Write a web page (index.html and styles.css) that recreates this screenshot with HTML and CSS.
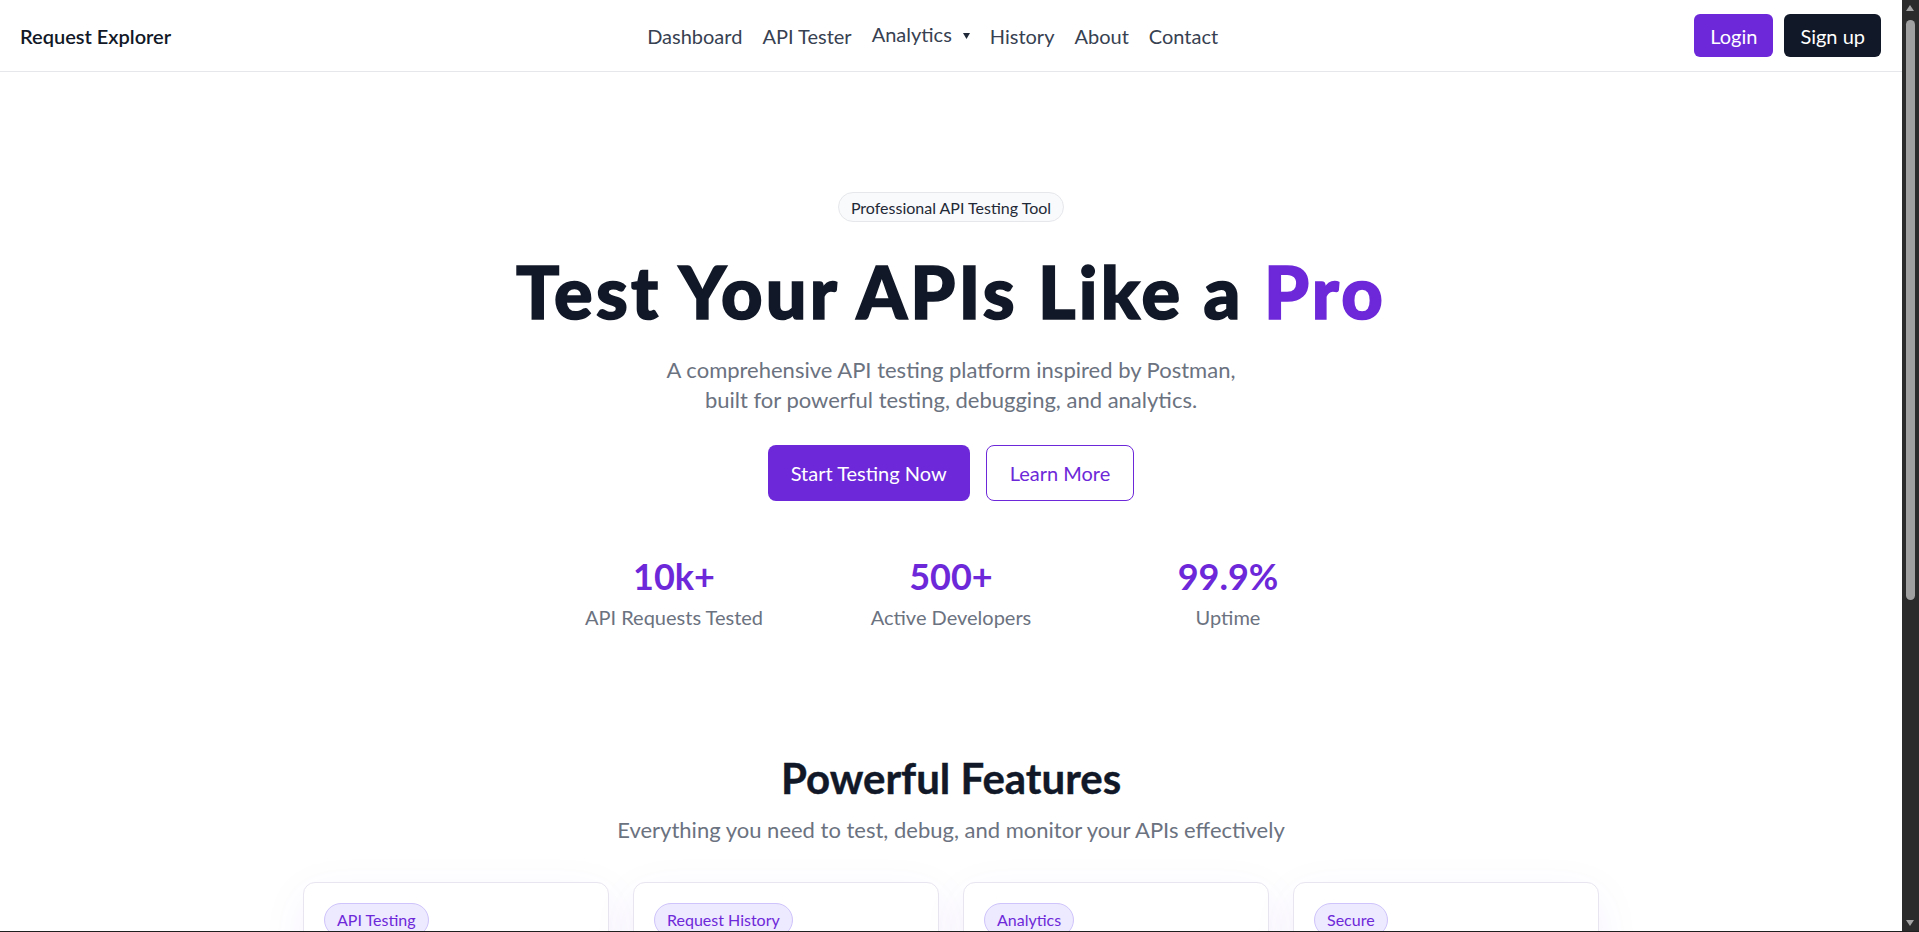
FILE: index.html
```html
<!DOCTYPE html>
<html lang="en">
<head>
<meta charset="utf-8">
<title>Request Explorer</title>
<link rel="stylesheet" href="styles.css">
</head>
<body>
<header class="nav">
  <a class="brand" href="#">Request Explorer</a>
  <nav class="nav-links">
    <a href="#">Dashboard</a>
    <a href="#">API Tester</a>
    <button class="nav-dropdown" type="button">Analytics
      <svg class="caret" width="7" height="6" viewBox="0 0 7 6"><path d="M0 0h7L3.5 6z" fill="#1f2937"/></svg>
    </button>
    <a href="#">History</a>
    <a href="#">About</a>
    <a href="#">Contact</a>
  </nav>
  <div class="nav-actions">
    <button class="btn-login" type="button">Login</button>
    <button class="btn-signup" type="button">Sign up</button>
  </div>
</header>

<main>
  <section class="hero">
    <span class="badge">Professional API Testing Tool</span>
    <h1 class="hero-title">Test Your APIs Like a <span class="accent">Pro</span></h1>
    <p class="hero-sub">A comprehensive API testing platform inspired by Postman,<br>built for powerful testing, debugging, and analytics.</p>
    <div class="hero-actions">
      <a class="btn btn-primary" href="#">Start Testing Now</a>
      <a class="btn btn-outline" href="#">Learn More</a>
    </div>
    <div class="stats">
      <div class="stat"><div class="stat-value">10k+</div><div class="stat-label">API Requests Tested</div></div>
      <div class="stat"><div class="stat-value">500+</div><div class="stat-label">Active Developers</div></div>
      <div class="stat"><div class="stat-value">99.9%</div><div class="stat-label">Uptime</div></div>
    </div>
  </section>

  <section class="features">
    <h2 class="section-title">Powerful Features</h2>
    <p class="section-sub">Everything you need to test, debug, and monitor your APIs effectively</p>
    <div class="feature-grid">
      <article class="card">
        <span class="pill">API Testing</span>
        <h3 class="card-title">Send Any Request</h3>
        <p class="card-text">Build GET, POST, PUT, PATCH and DELETE requests with headers, params and body in seconds.</p>
      </article>
      <article class="card">
        <span class="pill">Request History</span>
        <h3 class="card-title">Never Lose a Call</h3>
        <p class="card-text">Every request is saved automatically so you can replay, compare and share it later.</p>
      </article>
      <article class="card">
        <span class="pill">Analytics</span>
        <h3 class="card-title">Measure Performance</h3>
        <p class="card-text">Track response times, status codes and error rates with clear, real-time charts.</p>
      </article>
      <article class="card">
        <span class="pill">Secure</span>
        <h3 class="card-title">Safe by Default</h3>
        <p class="card-text">Tokens and secrets stay encrypted, and your data never leaves your workspace.</p>
      </article>
    </div>
  </section>

  <footer class="footer">
    <span class="footer-brand">Request Explorer</span>
    <span class="footer-copy">© 2024 Request Explorer. All rights reserved.</span>
  </footer>
</main>

<div class="scrollbar" aria-hidden="true">
  <span class="sb-arrow sb-up"></span>
  <span class="sb-thumb"></span>
  <span class="sb-arrow sb-down"></span>
</div>
<div class="window-edge"></div>
</body>
</html>
```

FILE: styles.css
```css
* {
  box-sizing: border-box;
  margin: 0;
  padding: 0;
}

html {
  background: #ffffff;
  scrollbar-width: none;
}

body {
  font-family: "Lato", "Liberation Sans", sans-serif;
  color: #111827;
  background: #ffffff;
  padding-right: 17px;
}

a {
  color: inherit;
  text-decoration: none;
}

button {
  font-family: inherit;
  border: none;
  background: none;
  cursor: pointer;
}

/* Navigation */
.nav {
  display: flex;
  align-items: center;
  height: 72px;
  padding: 0 21px 0 20px;
  border-bottom: 1px solid #e5e7eb;
}

.brand {
  font-size: 20px;
  font-weight: 600;
  color: #111827;
}

.nav-links {
  flex: 1;
  display: flex;
  justify-content: center;
  align-items: center;
  gap: 20px;
  font-size: 20px;
  color: #374151;
}

.nav-dropdown {
  display: flex;
  align-items: center;
  gap: 11px;
  font-size: 20px;
  color: #374151;
  margin-top: -3px;
}

.caret {
  margin-top: 3px;
}

.nav-actions {
  display: flex;
  gap: 11px;
}

.btn-login,
.btn-signup {
  height: 43px;
  padding: 0 16px;
  border-radius: 6px;
  font-size: 20px;
  color: #ffffff;
}

.btn-login {
  background: #6d28d9;
}

.btn-signup {
  background: #111827;
}

/* Hero */
.hero {
  display: flex;
  flex-direction: column;
  align-items: center;
  text-align: center;
  padding-top: 120px;
}

.badge {
  display: inline-flex;
  align-items: center;
  height: 30px;
  padding: 0 12px;
  border: 1px solid #e5e7eb;
  border-radius: 999px;
  background: #f9fafb;
  font-size: 16px;
  color: #1f2937;
}

.hero-title {
  margin-top: 30px;
  font-size: 72px;
  line-height: 1.1;
  font-weight: 900;
  letter-spacing: 3.2px;
  -webkit-text-stroke: 1.6px currentColor;
  color: #111827;
}

.accent {
  color: #6d28d9;
}

.hero-sub {
  margin-top: 24px;
  font-size: 22px;
  line-height: 30px;
  color: #6b7280;
}

.hero-actions {
  display: flex;
  gap: 16px;
  margin-top: 30px;
}

.btn {
  display: inline-flex;
  align-items: center;
  height: 56px;
  padding: 0 23px;
  border-radius: 8px;
  font-size: 20px;
}

.btn-primary {
  background: #6d28d9;
  color: #ffffff;
}

.btn-outline {
  border: 1px solid #6d28d9;
  color: #6d28d9;
  background: #ffffff;
}

.stats {
  display: grid;
  grid-template-columns: repeat(3, 245px);
  column-gap: 32px;
  margin-top: 54px;
}

.stat-value {
  font-size: 36px;
  line-height: 1.2;
  font-weight: 700;
  color: #6d28d9;
}

.stat-label {
  margin-top: 5px;
  font-size: 20px;
  line-height: 28px;
  color: #6b7280;
}

/* Features */
.features {
  max-width: 1296px;
  margin: 0 auto;
  padding: 122px 0 96px;
  text-align: center;
}

.section-title {
  font-size: 42px;
  line-height: 50px;
  font-weight: 700;
  -webkit-text-stroke: 0.4px currentColor;
  color: #111827;
}

.section-sub {
  margin-top: 12px;
  font-size: 22px;
  line-height: 30px;
  color: #6b7280;
}

.feature-grid {
  display: grid;
  grid-template-columns: repeat(4, 1fr);
  gap: 24px;
  margin-top: 37px;
  text-align: left;
}

.card {
  padding: 20px;
  border: 1px solid #e8e5f0;
  border-radius: 12px;
  background: #ffffff;
  box-shadow: 0 12px 48px rgba(109, 40, 217, 0.06);
}

.pill {
  display: inline-block;
  padding: 4px 12px;
  border: 1px solid #cfc4fb;
  border-radius: 999px;
  background: #ede9fe;
  font-size: 16px;
  line-height: 24px;
  color: #6d28d9;
}

.card-title {
  margin-top: 18px;
  font-size: 22px;
  font-weight: 700;
  color: #111827;
}

.card-text {
  margin-top: 10px;
  font-size: 17px;
  line-height: 26px;
  color: #6b7280;
}

.footer {
  display: flex;
  justify-content: space-between;
  align-items: center;
  padding: 40px 303px 60px;
  border-top: 1px solid #e5e7eb;
  color: #6b7280;
  font-size: 16px;
}

.footer-brand {
  font-weight: 600;
  color: #111827;
}

/* Window chrome: scrollbar and bottom frame edge */
.scrollbar {
  position: fixed;
  top: 0;
  right: 0;
  bottom: 0;
  width: 17px;
  background: #2b2b2b;
}

.sb-arrow {
  position: absolute;
  left: 4px;
  width: 0;
  height: 0;
  border-left: 4.5px solid transparent;
  border-right: 4.5px solid transparent;
}

.sb-up {
  top: 5px;
  border-bottom: 6px solid #a3a3a3;
}

.sb-down {
  bottom: 6px;
  border-top: 6px solid #a3a3a3;
}

.sb-thumb {
  position: absolute;
  top: 20px;
  left: 4px;
  width: 9px;
  height: 580px;
  border-radius: 5px;
  background: #a0a0a0;
}

.window-edge {
  position: fixed;
  left: 0;
  right: 0;
  bottom: 0;
  height: 1px;
  background: #1f1f1f;
}
```
